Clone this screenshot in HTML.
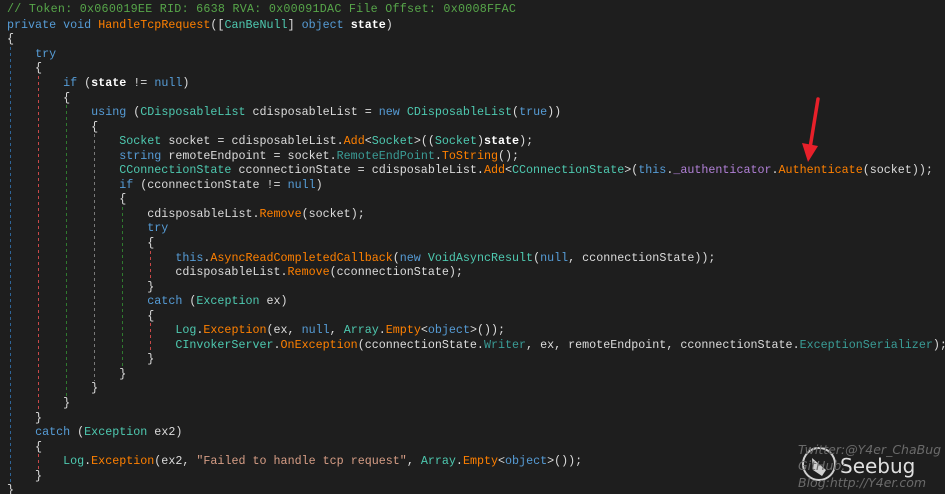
<!DOCTYPE html>
<html><head><meta charset="utf-8"><style>
html,body{margin:0;padding:0;background:#1e1e1e;width:945px;height:494px;overflow:hidden;position:relative}
#code{position:absolute;left:7px;top:17.8px;font-family:"Liberation Mono",monospace;font-size:11.7px;line-height:14.55px;color:#dcdcdc;white-space:pre}
#l1{position:absolute;left:7px;top:1.5px;font-family:"Liberation Mono",monospace;font-size:11.7px;letter-spacing:0.26px;line-height:14.55px;color:#57a64a;white-space:pre}
.k{color:#569cd6}.t{color:#4ec9b0}.m{color:#ff8000}.p{color:#3a9c96}.f{color:#b180d7}.s{color:#d69d85}.b{font-weight:bold;color:#fff}
.g{position:absolute;width:1px}
.bl{background:repeating-linear-gradient(to bottom,#2f6496 0 3px,transparent 3px 6px)}
.rd{background:repeating-linear-gradient(to bottom,#c84848 0 3px,transparent 3px 6px)}
.gr{background:repeating-linear-gradient(to bottom,#2f7a2f 0 3px,transparent 3px 6px)}
.gy{background:repeating-linear-gradient(to bottom,#7a7a7a 0 3px,transparent 3px 6px)}
.wm{position:absolute;font-family:"DejaVu Sans",sans-serif;font-style:italic;color:#6a6a6a;font-size:12.5px;line-height:16px}
</style></head><body>
<div id="l1">// Token: 0x060019EE RID: 6638 RVA: 0x00091DAC File Offset: 0x0008FFAC</div>
<div id="code"><span class="k">private</span> <span class="k">void</span> <span class="m">HandleTcpRequest</span>([<span class="t">CanBeNull</span>] <span class="k">object</span> <span class="b">state</span>)
{
    <span class="k">try</span>
    {
        <span class="k">if</span> (<span class="b">state</span> != <span class="k">null</span>)
        {
            <span class="k">using</span> (<span class="t">CDisposableList</span> cdisposableList = <span class="k">new</span> <span class="t">CDisposableList</span>(<span class="k">true</span>))
            {
                <span class="t">Socket</span> socket = cdisposableList.<span class="m">Add</span>&lt;<span class="t">Socket</span>&gt;((<span class="t">Socket</span>)<span class="b">state</span>);
                <span class="k">string</span> remoteEndpoint = socket.<span class="p">RemoteEndPoint</span>.<span class="m">ToString</span>();
                <span class="t">CConnectionState</span> cconnectionState = cdisposableList.<span class="m">Add</span>&lt;<span class="t">CConnectionState</span>&gt;(<span class="k">this</span>.<span class="f">_authenticator</span>.<span class="m">Authenticate</span>(socket));
                <span class="k">if</span> (cconnectionState != <span class="k">null</span>)
                {
                    cdisposableList.<span class="m">Remove</span>(socket);
                    <span class="k">try</span>
                    {
                        <span class="k">this</span>.<span class="m">AsyncReadCompletedCallback</span>(<span class="k">new</span> <span class="t">VoidAsyncResult</span>(<span class="k">null</span>, cconnectionState));
                        cdisposableList.<span class="m">Remove</span>(cconnectionState);
                    }
                    <span class="k">catch</span> (<span class="t">Exception</span> ex)
                    {
                        <span class="t">Log</span>.<span class="m">Exception</span>(ex, <span class="k">null</span>, <span class="t">Array</span>.<span class="m">Empty</span>&lt;<span class="k">object</span>&gt;());
                        <span class="t">CInvokerServer</span>.<span class="m">OnException</span>(cconnectionState.<span class="p">Writer</span>, ex, remoteEndpoint, cconnectionState.<span class="p">ExceptionSerializer</span>);
                    }
                }
            }
        }
    }
    <span class="k">catch</span> (<span class="t">Exception</span> ex2)
    {
        <span class="t">Log</span>.<span class="m">Exception</span>(ex2, <span class="s">"Failed to handle tcp request"</span>, <span class="t">Array</span>.<span class="m">Empty</span>&lt;<span class="k">object</span>&gt;());
    }
}</div>
<div class="g bl" style="left:10px;top:47px;height:436px"></div>
<div class="g rd" style="left:38px;top:76px;height:334px"></div>
<div class="g rd" style="left:38px;top:454px;height:15px"></div>
<div class="g gr" style="left:66px;top:105px;height:291px"></div>
<div class="g gy" style="left:94px;top:134px;height:247px"></div>
<div class="g gr" style="left:122px;top:207px;height:160px"></div>
<div class="g rd" style="left:150px;top:251px;height:29px"></div>
<div class="g rd" style="left:150px;top:323px;height:29px"></div>
<svg style="position:absolute;left:0;top:0" width="945" height="494">
<line x1="818" y1="99" x2="810" y2="148" stroke="#e8202a" stroke-width="3.5" stroke-linecap="round"/>
<polygon points="802,143 818,146 808,162" fill="#e8202a"/>
<circle cx="819" cy="464" r="16" fill="none" stroke="#cfcfcf" stroke-width="2"/>
<path d="M812 458 L826 470 L822 476 L813 470 Z" fill="#cfcfcf"/>
<text x="840" y="473" font-family="DejaVu Sans,sans-serif" font-size="20" fill="#e0e0e0">Seebug</text>
</svg>
<div class="wm" style="left:798px;top:442px">Twitter:@Y4er_ChaBug</div>
<div class="wm" style="left:798px;top:458px">GitHub:</div>
<div class="wm" style="left:798px;top:475px">Blog:http://Y4er.com</div>
</body></html>
